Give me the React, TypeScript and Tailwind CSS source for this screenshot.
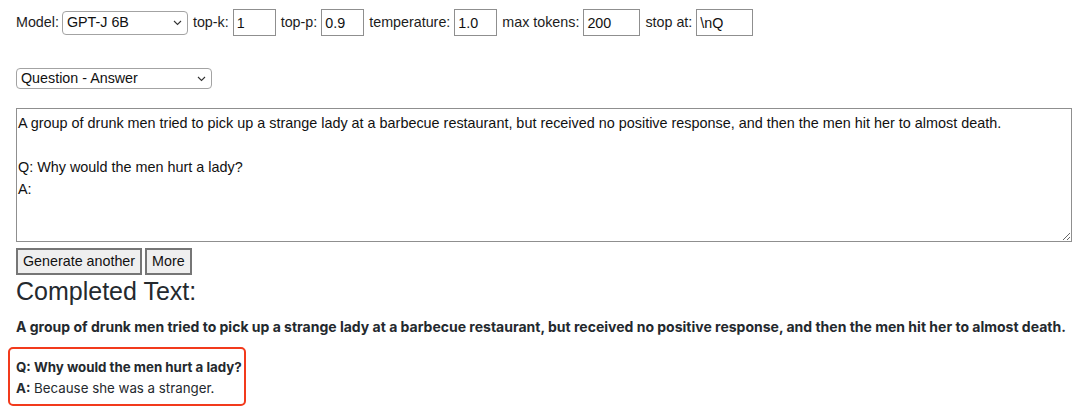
import { useState } from 'react';

const sans = { fontFamily: '"Liberation Sans", Arial, sans-serif' };
const ui = { fontFamily: 'Inter, "Noto Sans", sans-serif' };

const PROMPT =
  'A group of drunk men tried to pick up a strange lady at a barbecue restaurant, but received no positive response, and then the men hit her to almost death.\n\nQ: Why would the men hurt a lady?\nA:';

function Chevron() {
  return (
    <svg width="9" height="6" viewBox="0 0 9 6" className="pointer-events-none absolute right-[6px] top-1/2 -translate-y-1/2">
      <path d="M1 1l3.5 3.5L8 1" fill="none" stroke="#333" strokeWidth="1.1" />
    </svg>
  );
}

function Select({ value, options, className }: { value: string; options: string[]; className: string }) {
  const [v, setV] = useState(value);
  return (
    <span className="relative inline-block">
      <select
        value={v}
        onChange={(e) => setV(e.target.value)}
        className={`appearance-none rounded-[4px] border border-[#a3a3a3] bg-white pl-[4px] text-[14.3px] text-[#111] outline-none ${className}`}
        style={sans}
      >
        {options.map((o) => (
          <option key={o}>{o}</option>
        ))}
      </select>
      <Chevron />
    </span>
  );
}

function Field({ label, value, width }: { label: string; value: string; width: string }) {
  const [v, setV] = useState(value);
  return (
    <label className="flex items-center gap-[4px]">
      <span>{label}</span>
      <input
        value={v}
        onChange={(e) => setV(e.target.value)}
        className={`h-[27px] border border-[#8f8f8f] bg-white px-[3px] text-[14.3px] text-[#111] outline-none ${width}`}
        style={sans}
      />
    </label>
  );
}

export default function App() {
  const [prompt, setPrompt] = useState(PROMPT);

  return (
    <div className="min-h-[420px] w-[1080px] bg-white text-[14.3px] text-[#1c1c1c]" style={sans}>
      <div className="flex items-center gap-[5px] pl-[16px] pt-[9px]">
        <span className="mr-[-2px]">Model:</span>
        <Select value="GPT-J 6B" options={['GPT-J 6B']} className="h-[24px] w-[126px]" />
        <Field label="top-k:" value="1" width="w-[43px]" />
        <Field label="top-p:" value="0.9" width="w-[43px]" />
        <Field label="temperature:" value="1.0" width="w-[43px]" />
        <Field label="max tokens:" value="200" width="w-[57px]" />
        <Field label="stop at:" value="\nQ" width="w-[57px]" />
      </div>

      <div className="pl-[16px] pt-[32px]">
        <Select value="Question - Answer" options={['Question - Answer']} className="h-[21px] w-[196px] leading-[19px]" />
      </div>

      <div className="pl-[16px] pr-[8px] pt-[19px]">
        <textarea
          value={prompt}
          onChange={(e) => setPrompt(e.target.value)}
          className="block h-[134px] w-full resize-y border border-[#8f8f8f] px-[1px] py-[3px] text-[14.4px] leading-[22px] text-[#111] outline-none"
          style={sans}
        />
      </div>

      <div className="flex gap-[3px] pl-[16px] pt-[6px]">
        <button className="h-[27px] border-2 border-[#767676] bg-[#efefef] px-[5px] text-[14.3px] text-[#111]">
          Generate another
        </button>
        <button className="h-[27px] border-2 border-[#767676] bg-[#efefef] px-[5px] text-[14.3px] text-[#111]">
          More
        </button>
      </div>

      <h2 className="pl-[16px] pt-[2px] text-[25px] leading-[29px] text-[#24292e]">Completed Text:</h2>

      <div className="text-[14px] text-[#24292e]" style={ui}>
        <p className="pl-[16px] pt-[11px] font-bold leading-[20px]">
          A group of drunk men tried to pick up a strange lady at a barbecue restaurant, but received no positive response, and then the men hit her to almost death.
        </p>
        <div className="ml-[8px] mt-[10px] w-[238px] whitespace-nowrap rounded-[5px] border-2 border-[#f23a1c] px-[6px] pb-[5px] pt-[8px] text-[13.3px]">
          <p className="font-bold leading-[21px]">Q: Why would the men hurt a lady?</p>
          <p className="leading-[21px]">
            <span className="font-bold">A:</span> Because she was a stranger.
          </p>
        </div>
      </div>
    </div>
  );
}
